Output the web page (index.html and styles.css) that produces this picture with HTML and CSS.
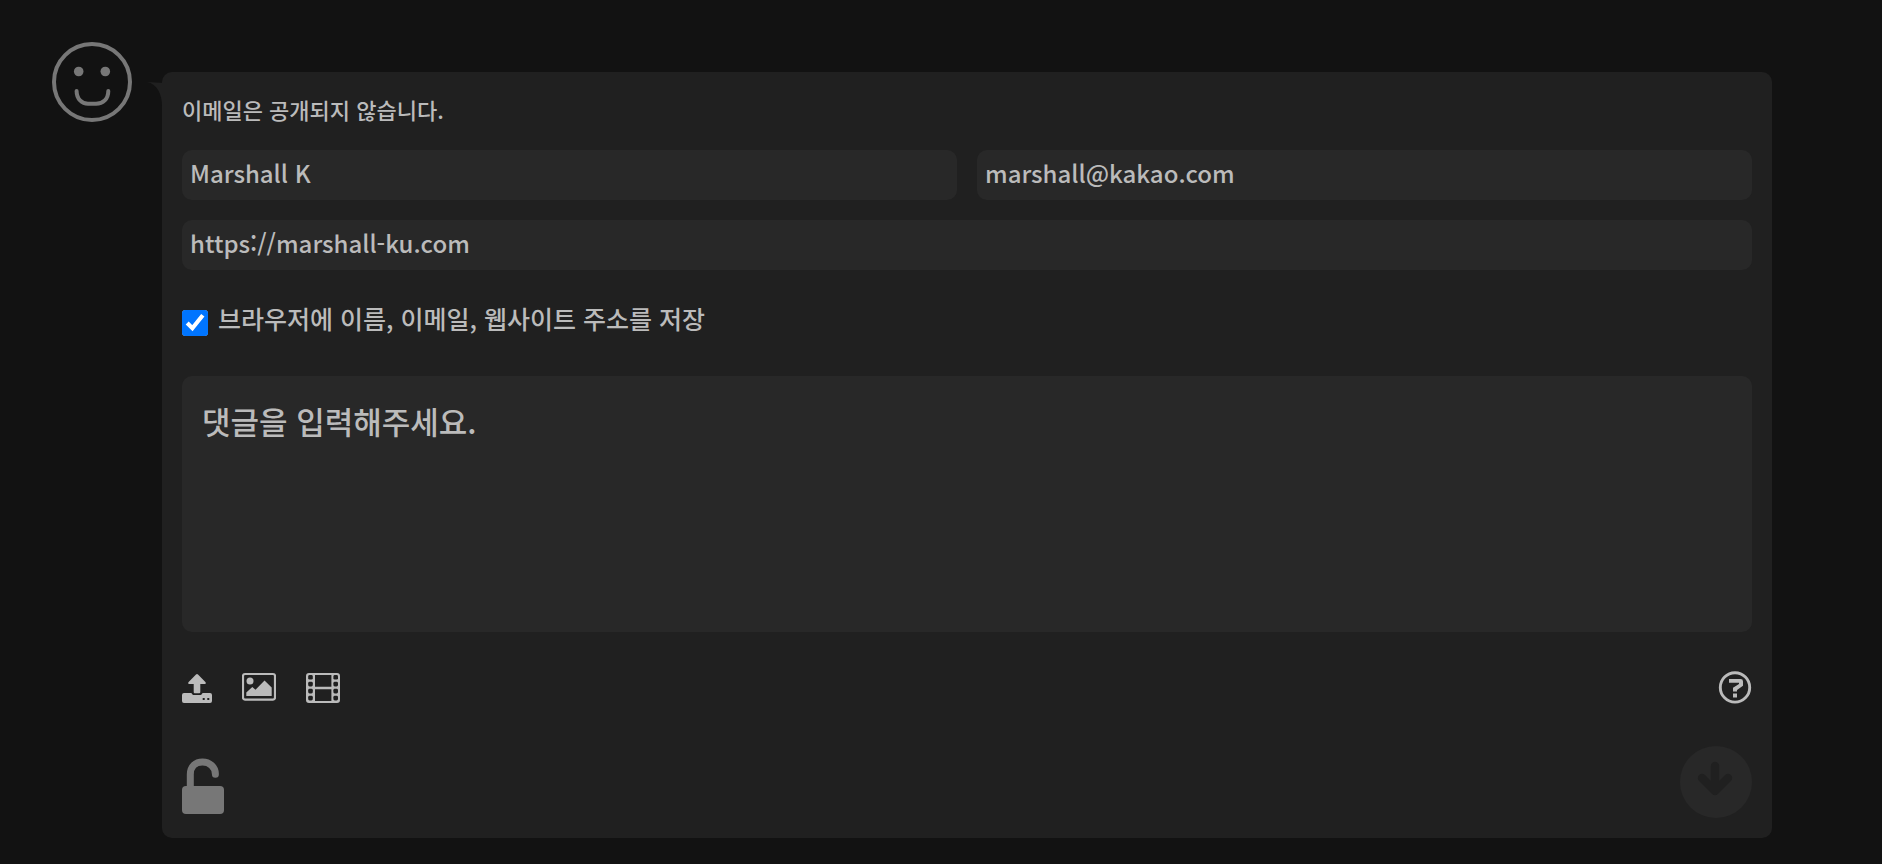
FILE: index.html
```html
<!DOCTYPE html>
<html lang="ko">
<head>
    <meta charset="UTF-8">
    <meta name="viewport" content="width=device-width, initial-scale=1.0">
    <title>댓글</title>
    <link rel="stylesheet" href="styles.css">
</head>
<body>
    <div class="comment-write">
        <svg class="avatar" viewBox="0 0 80 80" aria-hidden="true">
            <circle cx="40" cy="40" r="38" fill="none" stroke="currentColor" stroke-width="4"/>
            <circle cx="26.7" cy="29.5" r="4.8" fill="currentColor"/>
            <circle cx="53.3" cy="29.5" r="4.8" fill="currentColor"/>
            <path d="M24.6 49C24.6 57 30 61.8 36 61.8H44C51 61.8 56.3 57 56.3 49" fill="none" stroke="currentColor" stroke-width="4" stroke-linecap="round"/>
        </svg>

        <form class="comment-form">
            <svg class="tail" viewBox="0 0 16 24" aria-hidden="true">
                <path fill="currentColor" d="M0 0L16 1V24H15C15 12 10 2 0 0Z"/>
            </svg>

            <p class="notice">이메일은 공개되지 않습니다.</p>

            <div class="fields">
                <input class="field" type="text" value="Marshall K" aria-label="이름">
                <input class="field" type="email" value="marshall@kakao.com" aria-label="이메일">
                <input class="field field-wide" type="url" value="https://marshall-ku.com" aria-label="웹사이트">
            </div>

            <div class="remember">
                <input class="remember-check" type="checkbox" id="remember" checked>
                <label for="remember">브라우저에 이름, 이메일, 웹사이트 주소를 저장</label>
            </div>

            <textarea class="comment-text" placeholder="댓글을 입력해주세요." aria-label="댓글"></textarea>

            <div class="tools">
                <button class="tool-btn" type="button" aria-label="업로드">
                    <svg width="30" height="34" viewBox="0 0 30 34">
                        <path fill="currentColor" fill-rule="evenodd" d="M2 23H9.5C10 24.5 11 25 12 25H18C19 25 20 24.5 20.5 23H28A2 2 0 0 1 30 25V31A2 2 0 0 1 28 33H2A2 2 0 0 1 0 31V25A2 2 0 0 1 2 23ZM20.7 28V30H22.7V28ZM25.3 28V30H27.3V28Z"/>
                        <path fill="currentColor" d="M14 4.4Q15 3.4 16 4.4L23.6 12.2Q24.4 14 23 14H18.3V22Q18.3 23.2 17.2 23.2H12.8Q11.7 23.2 11.7 22V14H7Q5.6 14 6.4 12.2Z"/>
                    </svg>
                </button>
                <button class="tool-btn" type="button" aria-label="이미지">
                    <svg width="34" height="34" viewBox="0 0 34 34">
                        <rect x="1" y="4" width="32" height="25.6" rx="2" fill="none" stroke="currentColor" stroke-width="2.2"/>
                        <circle cx="8" cy="11" r="3.5" fill="currentColor"/>
                        <path fill="currentColor" d="M4.3 26V22.4L10.3 17L13.5 19.8L22.5 10.5L29.7 17.6V26Z"/>
                    </svg>
                </button>
                <button class="tool-btn" type="button" aria-label="동영상">
                    <svg width="34" height="34" viewBox="0 0 34 34">
                        <path fill="currentColor" fill-rule="evenodd" d="M3 3H31Q34 3 34 6V30Q34 33 31 33H3Q0 33 0 30V6Q0 3 3 3ZM9 5V16.8H25.4V5ZM9 19.2V31H25.4V19.2Z"/>
                        <g fill="#202020">
                            <rect x="2.2" y="5" width="4.6" height="4.6" rx="1.4"/>
                            <rect x="2.2" y="11.8" width="4.6" height="4.6" rx="1.4"/>
                            <rect x="2.2" y="18.8" width="4.6" height="4.6" rx="1.4"/>
                            <rect x="2.2" y="25.8" width="4.6" height="4.6" rx="1.4"/>
                            <rect x="27.4" y="5" width="4.6" height="4.6" rx="1.4"/>
                            <rect x="27.4" y="11.8" width="4.6" height="4.6" rx="1.4"/>
                            <rect x="27.4" y="18.8" width="4.6" height="4.6" rx="1.4"/>
                            <rect x="27.4" y="25.8" width="4.6" height="4.6" rx="1.4"/>
                        </g>
                    </svg>
                </button>
                <button class="tool-btn tool-help" type="button" aria-label="도움말">
                    <svg width="34" height="34" viewBox="0 0 34 34">
                        <circle cx="17" cy="17.4" r="14.7" fill="none" stroke="currentColor" stroke-width="2.9"/>
                        <path fill="currentColor" d="M11 9H22.6Q25 9 25 11.4V15.8L19 20V21.4H15V17.8L21 14V12.8H11ZM15 23.6H19V27.6H15Z"/>
                    </svg>
                </button>
            </div>

            <div class="actions">
                <button class="lock-btn" type="button" aria-label="비밀 댓글">
                    <svg width="42" height="60" viewBox="0 0 42 60">
                        <path d="M8.3 30V16.5C8.3 8.5 13.5 4 20.5 4C27.5 4 33.4 9 33.4 16.2" fill="none" stroke="currentColor" stroke-width="7" stroke-linecap="round"/>
                        <rect x="0" y="28" width="42" height="28" rx="4" fill="currentColor"/>
                    </svg>
                </button>
                <button class="submit-btn" type="submit" aria-label="댓글 작성">
                    <svg width="72" height="72" viewBox="0 0 72 72">
                        <path d="M35 20V44M22 32L35 45L48 32" fill="none" stroke="currentColor" stroke-width="8.4" stroke-linecap="round" stroke-linejoin="round"/>
                    </svg>
                </button>
            </div>
        </form>
    </div>
</body>
</html>
```

FILE: styles.css
```css
* {
    box-sizing: border-box;
}

body {
    margin: 0;
    font-family: "Noto Sans CJK KR", sans-serif;
    font-weight: 500;
    background-color: #121212;
    color: #bbbbbb;
}

button {
    display: flex;
    padding: 0;
    border: none;
    background: none;
    color: inherit;
    cursor: pointer;
}

.comment-write {
    display: flex;
    align-items: flex-start;
    gap: 30px;
    padding: 42px 110px 26px 52px;
}

.avatar {
    flex: none;
    width: 80px;
    height: 80px;
    color: #777777;
}

.comment-form {
    position: relative;
    flex: 1;
    margin-top: 30px;
    padding: 20px;
    border-radius: 10px;
    background-color: #202020;
}

.tail {
    position: absolute;
    top: 10px;
    left: -15px;
    width: 16px;
    height: 24px;
    color: #202020;
}

.notice {
    margin: 0 0 24px;
    font-size: 22px;
    line-height: 34px;
}

.fields {
    display: grid;
    grid-template-columns: 1fr 1fr;
    gap: 20px;
}

.field {
    width: 100%;
    height: 50px;
    padding: 0 8px 6px;
    border: none;
    border-radius: 10px;
    background-color: #282828;
    color: inherit;
    font-family: inherit;
    font-size: 24px;
    font-weight: inherit;
    outline: none;
}

.field-wide {
    grid-column: span 2;
}

.remember {
    display: flex;
    align-items: flex-end;
    gap: 10px;
    margin: 30px 0 40px;
    font-size: 25px;
    line-height: 36px;
}

.remember-check {
    width: 26px;
    height: 26px;
    margin: 0;
    clip-path: inset(0 round 3px);
}

.comment-text {
    display: block;
    width: 100%;
    height: 256px;
    padding: 20px;
    border: none;
    border-radius: 10px;
    background-color: #282828;
    color: inherit;
    font-family: inherit;
    font-size: 31px;
    font-weight: inherit;
    line-height: 50px;
    resize: none;
    outline: none;
}

.comment-text::placeholder {
    color: inherit;
}

.tools {
    display: flex;
    gap: 30px;
    margin: 38px 0 42px;
}

.tool-help {
    margin-left: auto;
}

.actions {
    display: flex;
    align-items: flex-end;
    justify-content: space-between;
}

.lock-btn {
    color: #777777;
}

.submit-btn {
    border-radius: 50%;
    background-color: #282828;
    color: #202020;
}
```
